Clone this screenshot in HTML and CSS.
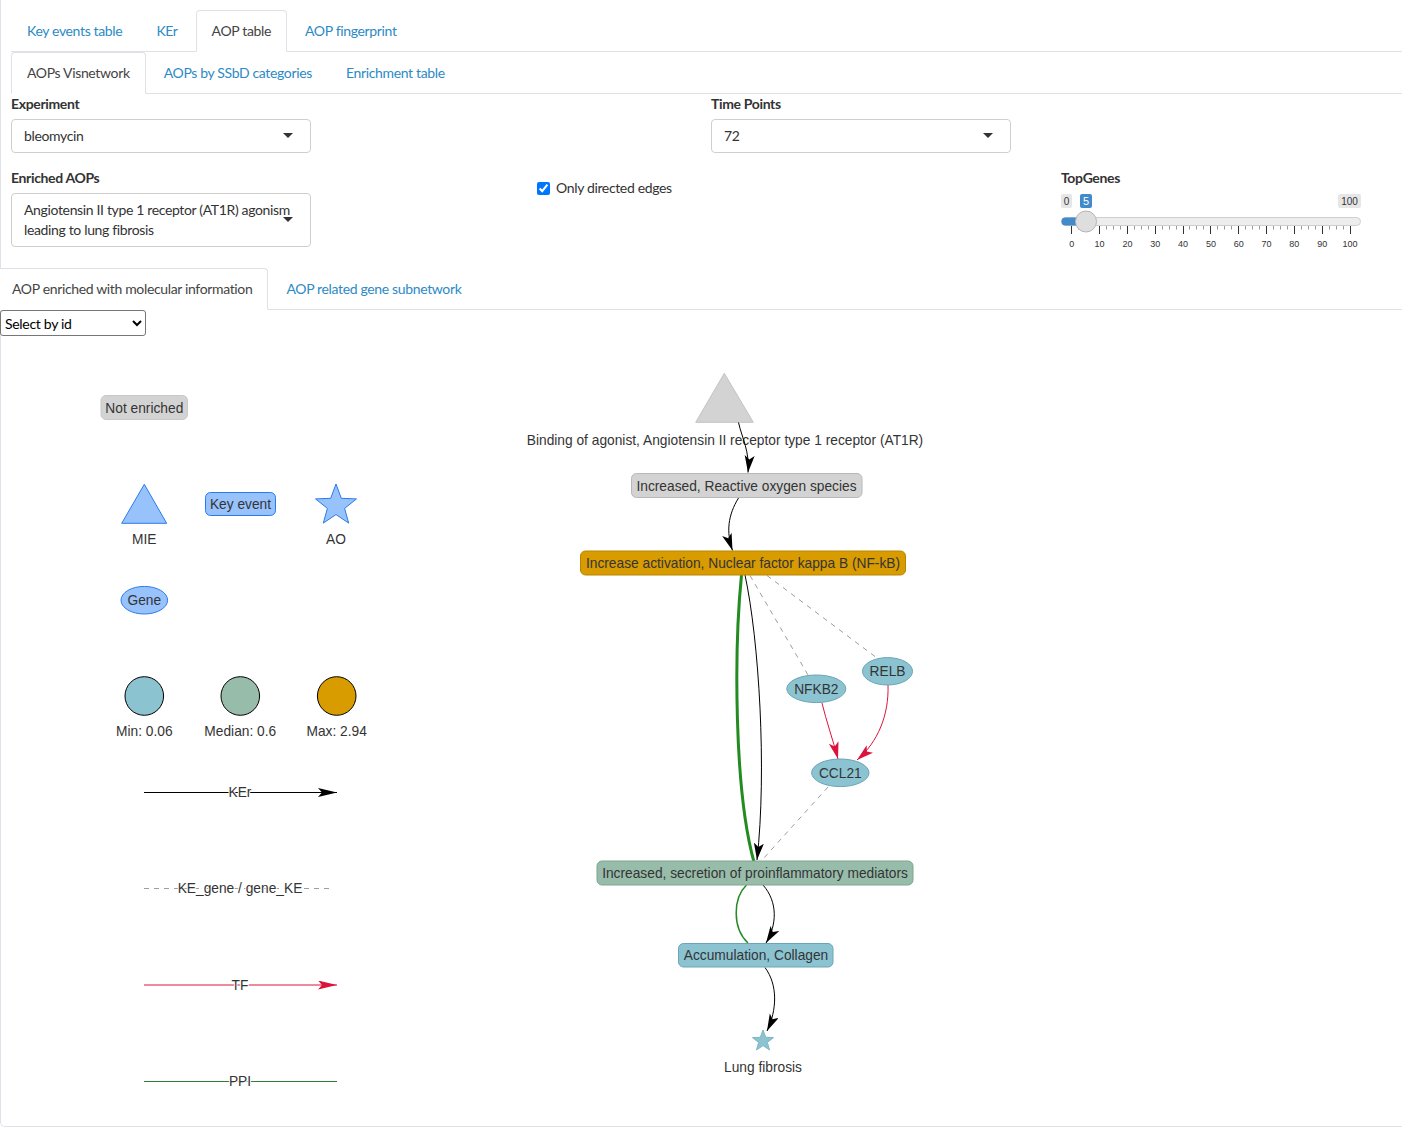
FILE: index.html
```html
<!DOCTYPE html>
<html lang="en">
<head>
<meta charset="utf-8">
<title>AOP table</title>
<link rel="stylesheet" href="styles.css">
</head>
<body>
<div class="page">
  <ul class="tabs">
    <li><a>Key events table</a></li>
    <li><a>KEr</a></li>
    <li><a class="active">AOP table</a></li>
    <li><a>AOP fingerprint</a></li>
  </ul>
  <ul class="tabs">
    <li><a class="active">AOPs Visnetwork</a></li>
    <li><a>AOPs by SSbD categories</a></li>
    <li><a>Enrichment table</a></li>
  </ul>

  <div class="row row1">
    <div class="group">
      <label class="lbl">Experiment</label>
      <div class="sel">bleomycin</div>
    </div>
    <div class="group">
      <label class="lbl">Time Points</label>
      <div class="sel">72</div>
    </div>
  </div>

  <div class="row row2">
    <div class="group">
      <label class="lbl">Enriched AOPs</label>
      <div class="sel">Angiotensin II type 1 receptor (AT1R) agonism leading to lung fibrosis</div>
    </div>
    <div class="group">
      <label class="check"><input type="checkbox" checked> Only directed edges</label>
    </div>
    <div class="group">
      <label class="lbl lbl-tight">TopGenes</label>
      <svg class="slider" width="300" height="62" viewBox="1061 188 300 62">
        <rect x="1061" y="194" width="11" height="14" rx="2" fill="#e6e6e6"/>
        <text x="1066.5" y="204.5" class="sl-lbl">0</text>
        <rect x="1080" y="194" width="12" height="14" rx="2" fill="#428bca"/>
        <text x="1086" y="205" class="sl-lbl sl-cur">5</text>
        <rect x="1338" y="194" width="23" height="14" rx="2" fill="#e6e6e6"/>
        <text x="1349.5" y="204.5" class="sl-lbl">100</text>
        <rect x="1061.5" y="217.5" width="299" height="8" rx="4" fill="#ededed" stroke="#cfcfcf"/>
        <rect x="1061.5" y="217.5" width="26" height="8" rx="4" fill="#428bca"/>
        <path d="M1071.5 226v8M1099.5 226v8M1127.5 226v8M1155.5 226v8M1183.5 226v8M1210.5 226v8M1238.5 226v8M1266.5 226v8M1294.5 226v8M1322.5 226v8M1350.5 226v8" stroke="#333" stroke-width="1"/>
        <path d="M1078.5 226v3.5M1085.5 226v3.5M1092.5 226v3.5M1106.5 226v3.5M1113.5 226v3.5M1120.5 226v3.5M1134.5 226v3.5M1141.5 226v3.5M1148.5 226v3.5M1162.5 226v3.5M1169.5 226v3.5M1176.5 226v3.5M1189.5 226v3.5M1196.5 226v3.5M1203.5 226v3.5M1217.5 226v3.5M1224.5 226v3.5M1231.5 226v3.5M1245.5 226v3.5M1252.5 226v3.5M1259.5 226v3.5M1273.5 226v3.5M1280.5 226v3.5M1287.5 226v3.5M1301.5 226v3.5M1308.5 226v3.5M1315.5 226v3.5M1329.5 226v3.5M1336.5 226v3.5M1343.5 226v3.5" stroke="#999" stroke-width="1"/>
        <circle cx="1086" cy="221.5" r="10.5" fill="#dedede" stroke="#b5b5b5"/>
        <g class="sl-tick">
          <text x="1071.7" y="247">0</text>
          <text x="1099.5" y="247">10</text>
          <text x="1127.4" y="247">20</text>
          <text x="1155.2" y="247">30</text>
          <text x="1183" y="247">40</text>
          <text x="1210.9" y="247">50</text>
          <text x="1238.7" y="247">60</text>
          <text x="1266.5" y="247">70</text>
          <text x="1294.3" y="247">80</text>
          <text x="1322.2" y="247">90</text>
          <text x="1350" y="247">100</text>
        </g>
      </svg>
    </div>
  </div>

  <ul class="tabs tabs-sub">
    <li><a class="active">AOP enriched with molecular information</a></li>
    <li><a>AOP related gene subnetwork</a></li>
  </ul>

  <select class="pick">
    <option>Select by id</option>
  </select>

  <svg class="net" width="1402" height="790" viewBox="0 336 1402 790">
    <defs>
      <marker id="ab" markerUnits="userSpaceOnUse" markerWidth="18" markerHeight="11" refX="17" refY="5" orient="auto">
        <path d="M0,0 L17,5 L0,10 L4,5 Z" fill="#000"/>
      </marker>
      <marker id="ar" markerUnits="userSpaceOnUse" markerWidth="18" markerHeight="11" refX="17" refY="5" orient="auto">
        <path d="M0,0 L17,5 L0,10 L4,5 Z" fill="#DC143C"/>
      </marker>
      <marker id="abl" markerUnits="userSpaceOnUse" markerWidth="20" markerHeight="10" refX="19" refY="4.5" orient="auto">
        <path d="M0,0 L19,4.5 L0,9 L4,4.5 Z" fill="#000"/>
      </marker>
      <marker id="arl" markerUnits="userSpaceOnUse" markerWidth="20" markerHeight="10" refX="19" refY="4.5" orient="auto">
        <path d="M0,0 L19,4.5 L0,9 L4,4.5 Z" fill="#DC143C"/>
      </marker>
    </defs>

    <!-- legend -->
    <g class="nl">
      <rect x="101" y="395.5" width="86.5" height="24" rx="5" fill="#D3D3D3" stroke="#c8c8c8"/>
      <text x="144.3" y="412.5">Not enriched</text>

      <polygon points="144.3,484.3 121.7,523.3 166.7,523.3" fill="#97C2FC" stroke="#2B7CE9"/>
      <text x="144.3" y="544">MIE</text>

      <rect x="205.5" y="492.5" width="70" height="23" rx="5" fill="#97C2FC" stroke="#2B7CE9"/>
      <text x="240.5" y="508.5">Key event</text>

      <polygon points="336,484 341.3,498.3 356.5,498.9 344.6,508.4 348.7,523.1 336,514.6 323.3,523.1 327.4,508.4 315.5,498.9 330.7,498.3" fill="#97C2FC" stroke="#2B7CE9"/>
      <text x="336" y="544">AO</text>

      <ellipse cx="144.3" cy="600.2" rx="23.3" ry="13.8" fill="#97C2FC" stroke="#2B7CE9"/>
      <text x="144.3" y="605">Gene</text>

      <circle cx="144.3" cy="696" r="19.3" fill="#8BC3D1" stroke="#000"/>
      <circle cx="240.3" cy="696" r="19.3" fill="#98BCAA" stroke="#000"/>
      <circle cx="336.7" cy="696" r="19.3" fill="#D89B00" stroke="#000"/>
      <text x="144.3" y="736">Min: 0.06</text>
      <text x="240.3" y="736">Median: 0.6</text>
      <text x="336.7" y="736">Max: 2.94</text>

      <line x1="144" y1="792.5" x2="337" y2="792.5" stroke="#000" marker-end="url(#abl)"/>
      <text class="el" x="240" y="797">KEr</text>
      <line x1="144" y1="888.5" x2="332" y2="888.5" stroke="#9e9e9e" stroke-dasharray="5,5"/>
      <text class="el" x="240" y="893">KE_gene / gene_KE</text>
      <line x1="144" y1="985" x2="337" y2="985" stroke="#DC143C" marker-end="url(#arl)"/>
      <text class="el" x="240" y="989.5">TF</text>
      <line x1="144" y1="1081.5" x2="337" y2="1081.5" stroke="#2e7d32"/>
      <text class="el" x="240" y="1086">PPI</text>
    </g>

    <!-- graph edges -->
    <g fill="none">
      <path d="M750,575.5 L808,675" stroke="#9e9e9e" stroke-dasharray="5,5"/>
      <path d="M767,575.5 L875,656.5" stroke="#9e9e9e" stroke-dasharray="5,5"/>
      <path d="M828,787 L763,859" stroke="#9e9e9e" stroke-dasharray="5,5"/>
      <path d="M741.5,575 C734,650 734,790 754,862" stroke="#228B22" stroke-width="3"/>
      <path d="M745,575 C759,640 767,770 757,860" stroke="#000" marker-end="url(#ab)"/>
      <path d="M822,703 C826,720 833,740 838,759" stroke="#DC143C" marker-end="url(#ar)"/>
      <path d="M888,685 C889,715 878,742 857,760" stroke="#DC143C" marker-end="url(#ar)"/>
      <path d="M738.5,498 C728,515 726,532 732.5,550.5" stroke="#000" marker-end="url(#ab)"/>
      <path d="M746.5,885 C733,898 732,928 748,943" stroke="#228B22" stroke-width="1.5"/>
      <path d="M763,885 C778,902 777,925 766,943" stroke="#000" marker-end="url(#ab)"/>
      <path d="M765,967.5 C778,985 777,1010 767,1031" stroke="#000" marker-end="url(#ab)"/>
    </g>

    <!-- graph nodes -->
    <g class="nl">
      <polygon points="724.3,373.3 695.7,422.3 753.3,422.3" fill="#D3D3D3" stroke="#c4c4c4"/>
      <text x="725" y="444.5">Binding of agonist, Angiotensin II receptor type 1 receptor (AT1R)</text>

      <rect x="631.5" y="473.5" width="230.5" height="24" rx="5" fill="#D3D3D3" stroke="#b8b8b8"/>
      <text x="746.5" y="490.5">Increased, Reactive oxygen species</text>

      <rect x="580.5" y="551" width="325" height="24" rx="5" fill="#D89B00" stroke="#b98500"/>
      <text x="743" y="567.5">Increase activation, Nuclear factor kappa B (NF-kB)</text>

      <ellipse cx="816.3" cy="688.8" rx="29.5" ry="13.8" fill="#8BC3D1" stroke="#6aa5b5"/>
      <text x="816.3" y="694">NFKB2</text>
      <ellipse cx="887.5" cy="671.3" rx="25" ry="13.7" fill="#8BC3D1" stroke="#6aa5b5"/>
      <text x="887.5" y="676.3">RELB</text>
      <ellipse cx="840.3" cy="772.8" rx="28.7" ry="13.8" fill="#8BC3D1" stroke="#6aa5b5"/>
      <text x="840.3" y="778">CCL21</text>

      <rect x="597" y="861" width="316" height="24" rx="5" fill="#98BCAA" stroke="#7ea592"/>
      <text x="755" y="877.5">Increased, secretion of proinflammatory mediators</text>

      <rect x="678.5" y="943.5" width="154.5" height="23.5" rx="5" fill="#8BC3D1" stroke="#6aa5b5"/>
      <text x="756" y="960">Accumulation, Collagen</text>

      <polygon points="763,1030 765.7,1037.3 773.5,1037.6 767.4,1042.4 769.5,1049.9 763,1045.6 756.5,1049.9 758.6,1042.4 752.5,1037.6 760.3,1037.3" fill="#8BC3D1" stroke="#7fb6c5"/>
      <text x="763" y="1072">Lung fibrosis</text>
    </g>

    <path d="M738.5,422.5 C742,438 750,452 748,472.5" fill="none" stroke="#000" marker-end="url(#ab)"/>
  </svg>
</div>
</body>
</html>
```

FILE: styles.css
```css
html, body {
  margin: 0;
  padding: 0;
  background: #fff;
}

body {
  font-family: "Lato", "Open Sans", sans-serif;
  font-size: 14px;
  letter-spacing: -0.35px;
  color: #333;
}

.page {
  border-left: 1px solid #dfe3e9;
  border-bottom: 1px solid #dfe3e9;
  border-bottom-left-radius: 5px;
  padding: 10px 0 0 10px;
}

.tabs {
  display: flex;
  list-style: none;
  margin: 0;
  padding: 0;
  border-bottom: 1px solid #dee2e6;
}

.tabs a {
  display: block;
  padding: 10px 15px;
  line-height: 20px;
  border: 1px solid transparent;
  border-radius: 4px 4px 0 0;
  margin-right: 2px;
  margin-bottom: -1px;
  color: #2c8ac6;
  cursor: pointer;
}

.tabs a.active {
  color: #444;
  background: #fff;
  border-color: #dee2e6;
  border-bottom-color: #fff;
}

.tabs-sub {
  margin-left: -15px;
}

.row {
  display: grid;
}

.row1 {
  grid-template-columns: 700px 1fr;
  margin-bottom: 15px;
}

.row2 {
  grid-template-columns: 526px 524px 1fr;
  margin-bottom: 18px;
}

.lbl {
  display: block;
  font-weight: 700;
  line-height: 20px;
  margin-bottom: 5px;
  color: #333;
}

.lbl-tight {
  margin-bottom: 0;
}

.sel {
  position: relative;
  width: 300px;
  box-sizing: border-box;
  border: 1px solid #cfcfcf;
  border-radius: 4px;
  padding: 6px 8px 6px 12px;
  line-height: 20px;
  background: #fff;
  color: #333;
}

.sel::after {
  content: "";
  position: absolute;
  right: 17px;
  top: 50%;
  margin-top: -3px;
  border-style: solid;
  border-width: 5px 5px 0 5px;
  border-color: #333 transparent transparent transparent;
}

.check {
  display: flex;
  align-items: center;
  margin-top: 10px;
  line-height: 20px;
}

.check input {
  width: 13px;
  height: 13px;
  margin: 0 6px 0 0;
  accent-color: #0075ff;
}

.slider {
  display: block;
  overflow: visible;
}

.sl-lbl {
  font-family: "Liberation Sans", Arial, sans-serif;
  font-size: 10px;
  letter-spacing: 0;
  fill: #333;
  text-anchor: middle;
}

.sl-cur {
  fill: #fff;
  font-size: 11px;
}

.sl-tick text {
  font-family: "Liberation Sans", Arial, sans-serif;
  font-size: 9px;
  letter-spacing: 0;
  fill: #333;
  text-anchor: middle;
}

.pick {
  display: block;
  margin-left: -11px;
  width: 146px;
  height: 26px;
  font-family: "Lato", "Open Sans", sans-serif;
  font-size: 14px;
  letter-spacing: -0.3px;
  color: #000;
  border: 1px solid #767676;
  border-radius: 3px;
  background: #fff;
  padding: 0;
}

.net {
  display: block;
  margin-left: -11px;
}

.nl text {
  font-family: "Liberation Sans", Arial, sans-serif;
  font-size: 13.75px;
  letter-spacing: 0;
  fill: #343434;
  text-anchor: middle;
}

.nl text.el {
  stroke: #fff;
  stroke-width: 2px;
  paint-order: stroke;
}
```
